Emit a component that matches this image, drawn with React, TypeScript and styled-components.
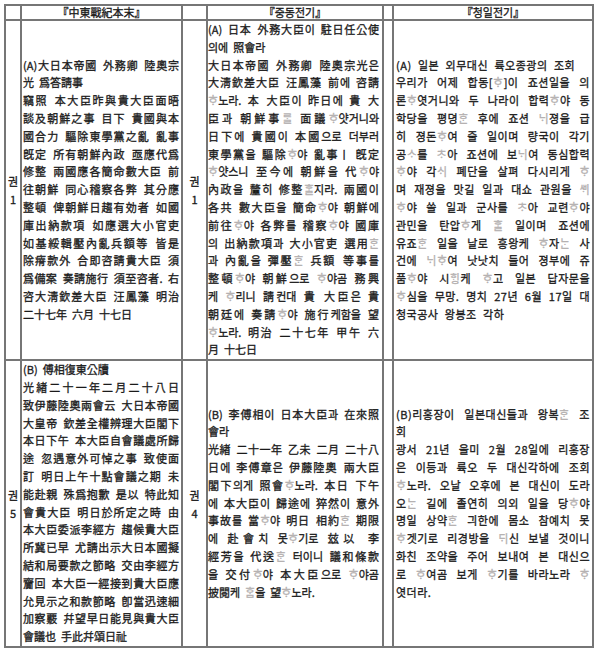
import styled, { createGlobalStyle } from 'styled-components';

const rule = '#767676';

const GlobalStyle = createGlobalStyle`
  body {
    margin: 0;
    background: #fff;
  }
`;

const Page = styled.div`
  padding: 4px;
`;

const Table = styled.table`
  width: 590px;
  table-layout: fixed;
  border-collapse: separate;
  border-spacing: 0;
  border-top: 2px solid ${rule};
  border-left: 2px solid ${rule};
  font-family: 'Noto Sans CJK KR', 'Noto Sans CJK SC', sans-serif;
  font-size: 11px;
  color: #1a1a1a;
  -webkit-text-stroke: 0.3px currentColor;
`;

const Col = styled.col<{ $w: number }>`
  width: ${p => p.$w}px;
`;

const Cell = styled.td`
  border-right: 2px solid ${rule};
  border-bottom: 2px solid ${rule};
  padding: 0;
  vertical-align: middle;
`;

const HeadCell = styled(Cell)`
  line-height: 13px;
  text-align: center;
`;

const LabelCell = styled(Cell)<{ $pad?: number }>`
  padding: 0 ${p => p.$pad ?? 0}px;
  line-height: 18px;
  text-align: center;
`;

const TextCell = styled(Cell)<{ $left: number; $right: number; $hangul?: boolean }>`
  padding: 0 ${p => p.$right}px 0 ${p => p.$left}px;
  line-height: 17.8px;
  word-spacing: ${p => (p.$hangul ? 3.4 : 2.5)}px;
  letter-spacing: ${p => (p.$hangul ? 0.5 : 0)}px;
`;

const Line = styled.div<{ $short?: boolean }>`
  text-align: ${p => (p.$short ? 'left' : 'justify')};
  text-align-last: ${p => (p.$short ? 'left' : 'justify')};
`;

const Faint = styled.span`
  color: #b4b0b0;
`;

// "~" at the start = last line of a paragraph (not justified), {..} = faint old-hangul glyphs
const chinaA = [
  '(A)大日本帝國 外務卿 陸奧宗',
  '~光 爲答請事',
  '竊照 本大臣昨與貴大臣面晤',
  '談及朝鮮之事 目下 貴國與本',
  '國合力 驅除東學黨之亂 亂事',
  '旣定 所有朝鮮內政 亟應代爲',
  '修整 兩國應各簡命數大臣 前',
  '往朝鮮 同心稽察各弊 其分應',
  '整頓 俾朝鮮日趨有効者 如國',
  '庫出納款項 如應選大小官吏',
  '如基綏輯壓內亂兵額等 皆是',
  '除瘠款外 合即咨請貴大臣 須',
  '爲備案 奏請施行 須至咨者. 右',
  '咨大淸欽差大臣 汪鳳藻 明治',
  '~二十七年 六月 十七日',
];

const mixedA = [
  '(A) 日本 外務大臣이 駐日任公使',
  '~의에 照會라',
  '大日本帝國 外務卿 陸奧宗光은',
  '大淸欽差大臣 汪鳳藻 前에 咨請',
  '{ᄒᆞ}노라. 本 大臣이 昨日에 貴 大',
  '臣과 朝鮮事{ᄅᆞᆯ} 面議{ᄒᆞ}얏거니와',
  '日下에 貴國이 本國으로 더부러',
  '東學黨을 驅除{ᄒᆞ}야 亂事ㅣ 旣定',
  '{ᄒᆞ}얏스니 至今에 朝鮮을 代{ᄒᆞ}야',
  '內政을 釐히 修整{ᄒᆞᆯ}지라. 兩國이',
  '各共 數大臣을 簡命{ᄒᆞ}야 朝鮮에',
  '前往{ᄒᆞ}야 各弊를 稽察{ᄒᆞ}야 國庫',
  '의 出納款項과 大小官吏 選用{ᄒᆞᆫ}',
  '과 內亂을 彈壓{ᄒᆞᆫ} 兵額 等事를',
  '整頓{ᄒᆞ}야 朝鮮으로 {ᄒᆞ}야곰 務興',
  '케 {ᄒᆞ}리니 請컨대 貴 大臣은 貴',
  '朝廷에 奏請{ᄒᆞ}야 施行케함을 望',
  '{ᄒᆞ}노라. 明治 二十七年 甲午 六',
  '~月 十七日',
];

const koreanA = [
  '~(A) 일본 외무대신 륙오종광의 조회',
  '우리가 어제 합동[{ᄒᆞ}]이 죠션일을 의',
  '론{ᄒᆞ}엿거니와 두 나라이 합력{ᄒᆞ}야 동',
  '학당을 평뎡{ᄒᆞᆫ} 후에 죠션 {ᄂᆡ}졍을 급',
  '히 졍돈{ᄒᆞ}여 줄 일이며 량국이 각기',
  '공{ᄉᆞ}를 {ᄎᆞ}아 죠션에 보{ᄂᆡ}여 동심합력',
  '{ᄒᆞ}야 각{ᄉᆡ} 폐단을 살펴 다시리게 {ᄒᆞ}',
  '며 재졍을 맛길 일과 대쇼 관원을 {ᄲᆡ}',
  '{ᄒᆞ}야 쓸 일과 군사를 {ᄎᆞ}아 교련{ᄒᆞ}야',
  '관민을 탄압{ᄒᆞ}게 {ᄒᆞᆯ} 일이며 죠션에',
  '유죠{ᄒᆞᆫ} 일을 날로 흥왕케 {ᄒᆞ}자{ᄂᆞᆫ} 사',
  '건에 {ᄂᆡᄒᆞ}여 낫낫치 들어 졍부에 쥬',
  '품{ᄒᆞ}야 시{ᄒᆡᆼ}케 {ᄒᆞ}고 일본 답자문을',
  '{ᄒᆞ}심을 무망. 명치 27년 6월 17일 대',
  '~청국공사 왕봉조 각하',
];

const chinaB = [
  '~(B) 傅相復東公牘',
  '光緖二十一年二月二十八日',
  '致伊藤陸奧兩會云 大日本帝國',
  '大皇帝 欽差全權辨理大臣閣下',
  '本日下午 本大臣自會議處所歸',
  '途 忽遇意外可悼之事 致使面',
  '訂 明日上午十點會議之期 未',
  '能赴親 殊爲抱歉 是以 特此知',
  '會貴大臣 明日於所定之時 由',
  '本大臣委派李經方 趨候貴大臣',
  '所冀已早 尤請出示大日本國擬',
  '結和局要款之節略 交由李經方',
  '齎回 本大臣一經接到貴大臣應',
  '允見示之和款節略 卽當迅速細',
  '加察覈 幷望早日能見與貴大臣',
  '~會議也 手此幷頌日祉',
];

const mixedB = [
  '(B) 李傅相이 日本大臣과 在來照',
  '~會라',
  '光緖 二十一年 乙未 二月 二十八',
  '日에 李傅章은 伊藤陸奧 兩大臣',
  '閣下의게 照會{ᄒᆞ}노라. 本日 下午',
  '에 本大臣이 歸途에 猝然이 意外',
  '事故를 當{ᄒᆞ}야 明日 相約{ᄒᆞᆫ} 期限',
  '에 赴會치 못{ᄒᆞ}기로 玆以 李',
  '經芳을 代送{ᄒᆞᆫ} 터이니 議和條款',
  '을 交付{ᄒᆞ}야 本大臣으로 {ᄒᆞ}야곰',
  '~披閱케 {ᄒᆞᆷ}을 望{ᄒᆞ}노라.',
];

const koreanB = [
  '(B)리홍장이 일본대신들과 왕복{ᄒᆞᆫ} 조',
  '~회',
  '광서 21년 을미 2월 28일에 리홍장',
  '은 이등과 륙오 두 대신각하에 조회',
  '{ᄒᆞ}노라. 오날 오후에 본 대신이 도라',
  '오{ᄂᆞᆫ} 길에 졸연히 의외 일을 당{ᄒᆞ}야',
  '명일 상약{ᄒᆞᆫ} 긔한에 몸소 참예치 못',
  '{ᄒᆞ}겟기로 리경방을 {ᄃᆡ}신 보낼 것이니',
  '화친 조약을 주어 보내여 본 대신으',
  '로 {ᄒᆞ}여곰 보게 {ᄒᆞ}기를 바라노라 {ᄒᆞ}',
  '~엿더라.',
];

const Passage = ({ lines }: { lines: string[] }) => (
  <>
    {lines.map((raw, i) => {
      const short = raw.startsWith('~');
      const text = short ? raw.slice(1) : raw;
      return (
        <Line key={i} $short={short}>
          {text.split(/(\{[^}]*\})/).map((part, j) =>
            part.startsWith('{') ? <Faint key={j}>{part.slice(1, -1)}</Faint> : part
          )}
        </Line>
      );
    })}
  </>
);

const rows = [
  { left: '권 1', right: '권 1', china: chinaA, mixed: mixedA, korean: koreanA },
  { left: '권 5', right: '권 4', china: chinaB, mixed: mixedB, korean: koreanB },
];

export default function App() {
  return (
    <Page>
      <GlobalStyle />
      <Table>
        <colgroup>
          <Col $w={16} />
          <Col $w={161} />
          <Col $w={25} />
          <Col $w={176} />
          <Col $w={10} />
          <Col $w={200} />
        </colgroup>
        <tbody>
          <tr>
            <HeadCell />
            <HeadCell>『中東戰紀本末』</HeadCell>
            <HeadCell />
            <HeadCell>『중동전기』</HeadCell>
            <HeadCell />
            <HeadCell>『청일전기』</HeadCell>
          </tr>
          {rows.map((r, i) => (
            <tr key={i}>
              <LabelCell>{r.left}</LabelCell>
              <TextCell $left={1} $right={2}>
                <Passage lines={r.china} />
              </TextCell>
              <LabelCell $pad={3}>{r.right}</LabelCell>
              <TextCell $left={0} $right={3}>
                <Passage lines={r.mixed} />
              </TextCell>
              <Cell />
              <TextCell $left={2} $right={2} $hangul>
                <Passage lines={r.korean} />
              </TextCell>
            </tr>
          ))}
        </tbody>
      </Table>
    </Page>
  );
}
